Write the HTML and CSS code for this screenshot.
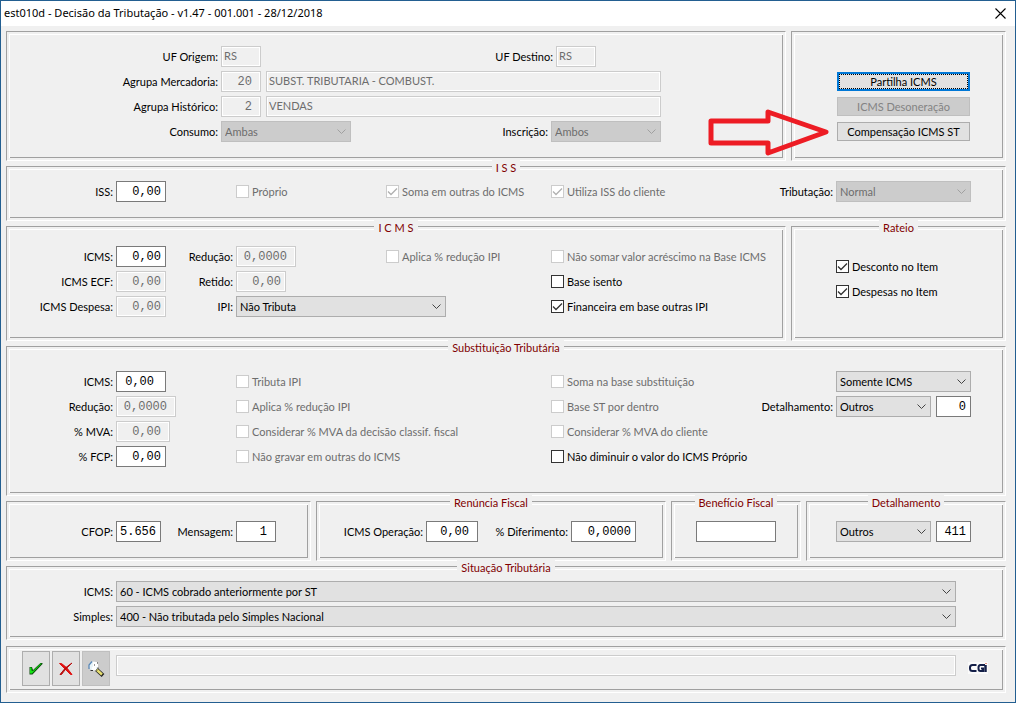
FILE: index.html
```html
<!DOCTYPE html>
<html lang="pt-BR">
<head>
<meta charset="utf-8">
<title>est010d - Decisão da Tributação</title>
<link rel="stylesheet" href="styles.css">
</head>
<body>
<div class="window">
  <header class="titlebar">
    <h1 class="title">est010d - Decisão da Tributação - v1.47 - 001.001 - 28/12/2018</h1>
    <button class="close" type="button" aria-label="Fechar"><svg width="11" height="11" viewBox="0 0 11 11"><path d="M.5.5l10 10M10.5.5l-10 10" stroke="#000" stroke-width="1.1" fill="none"/></svg></button>
  </header>
  <form class="content">
    <div class="split">
      <section class="panel filters">
        <div class="line">
          <label class="cap" for="uf-o">UF Origem:</label><input id="uf-o" class="w40" value="RS" disabled>
          <label class="cap grow" for="uf-d">UF Destino:</label><input id="uf-d" class="w40 uf-dest" value="RS" disabled>
        </div>
        <div class="line">
          <label class="cap" for="merc">Agrupa Mercadoria:</label><input id="merc" class="num mid w40" value="20" disabled>
          <input class="grow desc" aria-label="Descrição da mercadoria" value="SUBST. TRIBUTARIA - COMBUST." disabled>
        </div>
        <div class="line">
          <label class="cap" for="hist">Agrupa Histórico:</label><input id="hist" class="num mid w40" value="2" disabled>
          <input class="grow desc" aria-label="Descrição do histórico" value="VENDAS" disabled>
        </div>
        <div class="line">
          <label class="cap" for="cons">Consumo:</label><select id="cons" class="w130" disabled><option>Ambas</option></select>
          <label class="cap grow" for="insc">Inscrição:</label><select id="insc" class="w110" disabled><option>Ambos</option></select>
        </div>
      </section>
      <section class="panel actions">
        <button class="btn focused" type="button">Partilha ICMS</button>
        <button class="btn" type="button" disabled>ICMS Desoneração</button>
        <button class="btn" type="button">Compensação ICMS ST</button>
      </section>
      <svg class="pointer" width="124" height="50" viewBox="0 0 124 50"><path d="M5 14H62V5L120 25L62 46V36H5Z" fill="none" stroke="#ed1c24" stroke-width="5" stroke-linejoin="round"/></svg>
    </div>

    <section class="panel grid iss">
      <h2 class="legend">I S S</h2>
      <label class="cap" for="iss">ISS:</label>
      <div class="cell"><input id="iss" class="num w50" value="0,00"></div>
      <label class="check off"><input type="checkbox" disabled>Próprio</label>
      <label class="check off"><input type="checkbox" checked disabled>Soma em outras do ICMS</label>
      <label class="check off"><input type="checkbox" checked disabled>Utiliza ISS do cliente</label>
      <label class="cap" for="trib">Tributação:</label>
      <select id="trib" disabled><option>Normal</option></select>
    </section>

    <div class="split">
      <section class="panel grid narrow icms">
        <h2 class="legend">I C M S</h2>
        <label class="cap" for="icms">ICMS:</label>
        <div class="cell"><input id="icms" class="num w50" value="0,00"><label class="cap grow" for="red">Redução:</label></div>
        <div class="cell"><input id="red" class="num mid w60" value="0,0000" disabled></div>
        <label class="check off"><input type="checkbox" disabled>Aplica % redução IPI</label>
        <label class="check off"><input type="checkbox" disabled>Não somar valor acréscimo na Base ICMS</label>

        <label class="cap" for="ecf">ICMS ECF:</label>
        <div class="cell"><input id="ecf" class="num w50" value="0,00" disabled><label class="cap grow" for="ret">Retido:</label></div>
        <div class="cell"><input id="ret" class="num w50" value="0,00" disabled></div>
        <label class="check col5"><input type="checkbox">Base isento</label>

        <label class="cap" for="desp">ICMS Despesa:</label>
        <div class="cell"><input id="desp" class="num w50" value="0,00" disabled><label class="cap grow" for="ipi">IPI:</label></div>
        <div class="cell span2"><select id="ipi" class="w210"><option>Não Tributa</option></select></div>
        <label class="check"><input type="checkbox" checked>Financeira em base outras IPI</label>
      </section>
      <section class="panel rateio">
        <h2 class="legend">Rateio</h2>
        <label class="check"><input type="checkbox" checked>Desconto no Item</label>
        <label class="check"><input type="checkbox" checked>Despesas no Item</label>
      </section>
    </div>

    <section class="panel grid subst">
      <h2 class="legend">Substituição Tributária</h2>
      <label class="cap" for="s-icms">ICMS:</label>
      <div class="cell"><input id="s-icms" class="num wide w50" value="0,00"></div>
      <label class="check off span2"><input type="checkbox" disabled>Tributa IPI</label>
      <label class="check off"><input type="checkbox" disabled>Soma na base substituição</label>
      <select class="col7" aria-label="Base"><option>Somente ICMS</option></select>

      <label class="cap" for="s-red">Redução:</label>
      <div class="cell"><input id="s-red" class="num mid w60" value="0,0000" disabled></div>
      <label class="check off span2"><input type="checkbox" disabled>Aplica % redução IPI</label>
      <label class="check off"><input type="checkbox" disabled>Base ST por dentro</label>
      <label class="cap" for="s-det">Detalhamento:</label>
      <div class="cell pair"><select id="s-det" class="grow"><option>Outros</option></select><input class="num w35" aria-label="Código" value="0"></div>

      <label class="cap" for="mva">% MVA:</label>
      <div class="cell"><input id="mva" class="num mid w54" value="0,00" disabled></div>
      <label class="check off span2"><input type="checkbox" disabled>Considerar % MVA da decisão classif. fiscal</label>
      <label class="check off span3"><input type="checkbox" disabled>Considerar % MVA do cliente</label>

      <label class="cap" for="fcp">% FCP:</label>
      <div class="cell"><input id="fcp" class="num w50" value="0,00"></div>
      <label class="check off span2"><input type="checkbox" disabled>Não gravar em outras do ICMS</label>
      <label class="check span3"><input type="checkbox">Não diminuir o valor do ICMS Próprio</label>
    </section>

    <div class="quad">
      <section class="panel small">
        <label class="cap first" for="cfop">CFOP:</label><input id="cfop" class="num w45" value="5.656">
        <label class="cap second" for="msg">Mensagem:</label><input id="msg" class="num mid w40" value="1">
      </section>
      <section class="panel small">
        <h2 class="legend">Renúncia Fiscal</h2>
        <label class="cap first" for="oper">ICMS Operação:</label><input id="oper" class="num mid w52" value="0,00">
        <label class="cap third" for="dif">% Diferimento:</label><input id="dif" class="num w65" value="0,0000">
      </section>
      <section class="panel small benefit">
        <h2 class="legend">Benefício Fiscal</h2>
        <input class="w80" aria-label="Benefício Fiscal">
      </section>
      <section class="panel small detail">
        <h2 class="legend">Detalhamento</h2>
        <div class="cell pair"><select class="w95" aria-label="Detalhamento"><option>Outros</option></select><input class="num w35" aria-label="Código do detalhamento" value="411"></div>
      </section>
    </div>

    <section class="panel situ">
      <h2 class="legend">Situação Tributária</h2>
      <label class="cap" for="st-icms">ICMS:</label><select id="st-icms"><option>60 - ICMS cobrado anteriormente por ST</option></select>
      <label class="cap" for="st-simp">Simples:</label><select id="st-simp"><option>400 - Não tributada pelo Simples Nacional</option></select>
    </section>

    <footer class="panel toolbar">
      <button class="tool" type="button" aria-label="Confirmar"><svg width="16" height="16" viewBox="0 0 16 16"><path d="M1.500 6v7.500H4.500L14.500 3V2H12.500L5 9L4 6Z" fill="#0c4a0c"/><path d="M2 6.500v6h2L13.500 2.500h-1L5 10L3.500 9.500V6.500Z" fill="#14e414"/></svg></button>
      <button class="tool" type="button" aria-label="Cancelar"><svg width="16" height="16" viewBox="0 0 16 16"><path d="M1.500 2.500h2Q9 6 14 13.500h-1.500Q8 9 1.500 2.500Z" fill="#e01212" stroke="#e01212"/><path d="M14 2Q7 6 2 13.500h1.500Q7 8 14 2Z" fill="#b80c0c" stroke="#b80c0c"/></svg></button>
      <button class="tool" type="button" aria-label="Pesquisar" disabled><svg width="18" height="18" viewBox="0 0 18 18"><path d="M9.500 9.500l6.500 6" stroke="#222" stroke-width="4"/><path d="M9.500 9.500l5.500 5" stroke="#e8e070" stroke-width="2.400"/><circle cx="6.500" cy="6" r="4.500" fill="#e9f5fa"/><path d="M2 9V5l3-3.500" fill="none" stroke="#5a88b8" stroke-width="1.300"/><path d="M6 2h4l1 2v3H9v3H5V7h1Z" fill="#fff"/><path d="M3.500 10.500H6M9 10h1.500M11 7.500v1M7 5h1M10 3h1" stroke="#333" stroke-width="1"/></svg></button>
      <input class="grow status" aria-label="Mensagem de status" disabled>
      <svg class="logo" width="20" height="14" viewBox="0 0 20 14" role="img" aria-label="CGI"><path d="M0 0h20v12H0Z" fill="#fafafa"/><path d="M8.500 3H4.500Q2 3 2 5.500v1Q2 9 4.500 9h4M17 3h-4.500Q10.500 3 10.500 5.500v1q0 2.500 2 2.500H15V6.500h-2" fill="none" stroke="#141f48" stroke-width="2"/><path d="M17.500 3v7" stroke="#141f48" stroke-width="2.500"/><path d="M17 1.500h2" stroke="#e09080" stroke-width="1"/></svg>
    </footer>
  </form>
</div>
</body>
</html>
```
FILE: styles.css
```css
* { box-sizing: border-box; }
body { margin: 0; font-family: Lato, "Liberation Sans", Arial, sans-serif; font-size: 11px; color: #000; }
h1, h2 { margin: 0; font-weight: 400; }

.window { min-height: 100vh; border: 1px solid #235f91; background: #f0f0f0; }
.titlebar { display: flex; align-items: center; justify-content: space-between; height: 25px; padding: 0 9px 0 3px; background: #fff; }
.title { font-family: "Noto Sans", "Open Sans", sans-serif; font-size: 11px; line-height: 21px; padding-bottom: 2px; }
.close { display: flex; padding: 0; border: 0; background: none; }

.content { display: flex; flex-direction: column; gap: 5px; padding: 5px 9px 9px 5px; }
.split { position: relative; display: grid; grid-template-columns: minmax(0, 1fr) 215px; gap: 5px; }
.quad { display: grid; grid-template-columns: 305fr 350fr 130fr 200fr; gap: 5px; }

.panel {
  position: relative;
  border: 1px solid;
  border-color: #a0a0a0 #fff #fff #a0a0a0;
  box-shadow: inset 2px 2px #f0f0f0, inset -2px -2px #f0f0f0, inset 3px 3px #fff, inset -3px -3px #a0a0a0;
}
.legend { position: absolute; top: -7px; left: 0; right: 0; width: fit-content; margin: 0 auto; padding: 0 4px; background: #f0f0f0; color: #800000; font-size: 11px; line-height: 15px; white-space: pre; }

.cap { text-align: right; line-height: 22px; height: 21px; white-space: nowrap; }
.grow { flex: 1; min-width: 0; }
.line, .cell { display: flex; gap: 3px; }
.pair { gap: 5px; }

input, select, button { font: inherit; color: inherit; margin: 0; border-radius: 0; }
input:not([type="checkbox"]) { height: 21px; padding: 0 3px 2px 2px; border: 1px solid #7a7a7a; background: #fff; }
input:not([type="checkbox"]):disabled { border-color: #ccc; background: #f0f0f0; box-shadow: inset 0 0 0 1px #fff; color: #6d6d6d; }
input.num:not([type="checkbox"]) { padding: 0 4px 0 2px; font-family: "Liberation Mono", monospace; font-size: 12px; text-align: right; }
input.mid:not([type="checkbox"]) { padding-right: 8px; }
input.wide:not([type="checkbox"]) { padding-right: 11px; }

select {
  appearance: none; height: 21px; padding: 0 20px 0 3px; border: 1px solid #adadad;
  background: #e1e1e1 url("data:image/svg+xml,%3Csvg xmlns='http://www.w3.org/2000/svg' width='9' height='6'%3E%3Cpath d='M.5.5l4 4 4-4' fill='none' stroke='%23444'/%3E%3C/svg%3E") no-repeat right 4px center;
}
select:disabled { border-color: #bfbfbf; background-color: #ccc; color: #6d6d6d; opacity: 1; background-image: url("data:image/svg+xml,%3Csvg xmlns='http://www.w3.org/2000/svg' width='9' height='6'%3E%3Cpath d='M.5.5l4 4 4-4' fill='none' stroke='%23a0a0a0'/%3E%3C/svg%3E"); }

.check { display: flex; align-items: center; gap: 3px; height: 21px; line-height: 22px; white-space: nowrap; }
.check.off { color: #6d6d6d; }
.check input { appearance: none; width: 13px; height: 13px; border: 1px solid #333; background: #fff center no-repeat; }
.check.off input { border-color: #ccc; }
.check input:checked { background-image: url("data:image/svg+xml,%3Csvg xmlns='http://www.w3.org/2000/svg' width='11' height='11'%3E%3Cpath d='M1 5.500l3 3 6-6' fill='none' stroke='%23333' stroke-width='1.300'/%3E%3C/svg%3E"); }
.check.off input:checked { background-image: url("data:image/svg+xml,%3Csvg xmlns='http://www.w3.org/2000/svg' width='11' height='11'%3E%3Cpath d='M1 5.500l3 3 6-6' fill='none' stroke='%23b0b0b0' stroke-width='1.300'/%3E%3C/svg%3E"); }

.w35 { width: 35px; } .w40 { width: 40px; } .w45 { width: 45px; } .w50 { width: 50px; }
.w52 { width: 52px; } .w54 { width: 54px; } .w60 { width: 60px; } .w65 { width: 65px; }
.w80 { width: 80px; } .w95 { width: 95px; } .w110 { width: 110px; } .w130 { width: 130px; } .w210 { width: 210px; }

.filters { display: flex; flex-direction: column; gap: 4px; padding: 14px 124px 18px 0; }
.filters .cap:first-child { width: 211px; }
.uf-dest { margin-right: 65px; }
.desc { margin-left: 2px; }

.actions { display: flex; flex-direction: column; gap: 6px; padding: 40px 35px 18px 45px; }
.btn { height: 19px; padding: 0; border: 1px solid #adadad; background: #e1e1e1; }
.btn:disabled { border-color: #bfbfbf; background: #ccc; color: #838383; }
.btn.focused { border: 2px solid #0078d7; outline: 1px dotted #000; outline-offset: -3px; }
.pointer { position: absolute; top: 76px; right: 176px; }

.grid { display: grid; grid-template-columns: 106px 117px 147px 162px 1fr 72px 135px; gap: 4px 3px; padding-right: 34px; }
.narrow { grid-template-columns: 106px 117px 147px 162px 1fr; padding-right: 0; }
.iss { padding-top: 14px; padding-bottom: 18px; }
.icms { padding-top: 19px; padding-bottom: 23px; }
.subst { padding-top: 24px; padding-bottom: 28px; }
.span2 { grid-column: span 2; }
.span3 { grid-column: span 3; }
.col5 { grid-column: 5; }
.col7 { grid-column: 7; }
.rateio { display: flex; flex-direction: column; gap: 4px; padding: 29px 0 0 44px; }

.small { display: flex; gap: 3px; padding: 19px 0 18px; }
.first { width: 106px; }
.second { width: 69px; }
.third { width: 87px; }
.benefit { padding-left: 24px; }
.detail { padding-left: 29px; }

.situ { display: grid; grid-template-columns: 106px 1fr; gap: 4px 3px; padding: 14px 49px 12px 0; }
.toolbar { display: flex; align-items: center; gap: 2px; margin-top: 1px; padding: 4px 17px 6px 15px; }
.tool { display: flex; align-items: center; justify-content: center; width: 28px; height: 35px; padding: 0; border: 1px solid #adadad; background: #e1e1e1; }
.tool:disabled { border-color: #bfbfbf; background: #ccc; }
.status { margin: 0 10px 6px 4px; }
```
